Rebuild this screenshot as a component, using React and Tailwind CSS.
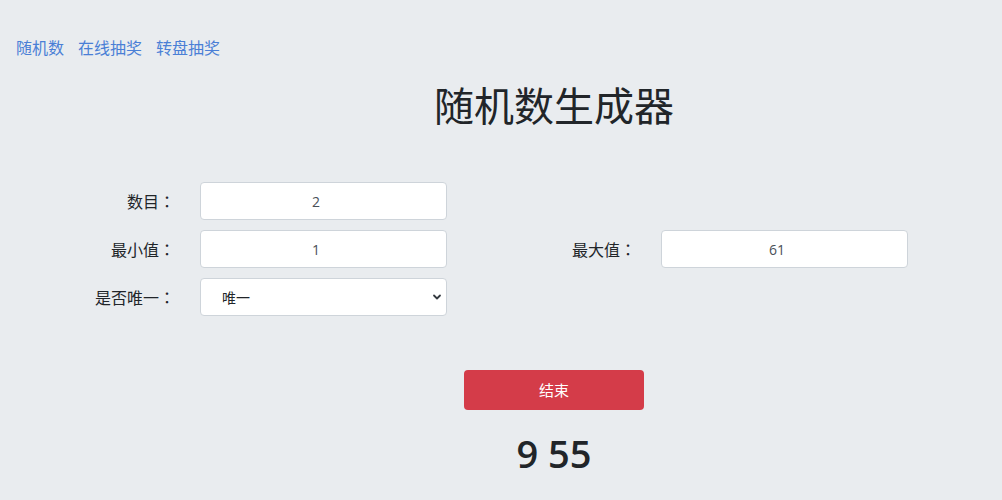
import React from "react";

const font = { fontFamily: '"Open Sans", "Noto Sans CJK SC", sans-serif' };

function Colon() {
  return <span className="font-['Noto_Sans_CJK_JP',sans-serif]">：</span>;
}

function Label({ children }) {
  return (
    <div className="w-[175px] text-right text-[16px] text-[#212529]">
      {children}
      <Colon />
    </div>
  );
}

function Field({ label, value }) {
  return (
    <div className="flex items-center w-[461px]">
      <Label>{label}</Label>
      <input
        readOnly
        value={value}
        className="ml-[25px] w-[247px] h-[38px] rounded-[4px] border border-[#ced4da] bg-white text-center pr-[15px] text-[14px] text-[#495057] outline-none"
      />
    </div>
  );
}

export default function App() {
  return (
    <div className="min-h-[500px] w-full bg-[#e9ecef]" style={font}>
      <nav className="flex gap-[14px] pl-[16px] pt-[36px] text-[16px] leading-[24px] text-[#4a7fd6]">
        <a href="#">随机数</a>
        <a href="#">在线抽奖</a>
        <a href="#">转盘抽奖</a>
      </nav>
      <div className="pl-[106px] flex justify-center mt-[22px]">
        <h1 className="text-[40px] leading-[48px] text-[#212529]">随机数生成器</h1>
      </div>
      <div className="mt-[52px] flex flex-col gap-[10px]">
        <div className="flex">
          <Field label="数目" value="2" />
        </div>
        <div className="flex">
          <Field label="最小值" value="1" />
          <Field label="最大值" value="61" />
        </div>
        <div className="flex items-center w-[461px]">
          <Label>是否唯一</Label>
          <div className="ml-[25px] relative w-[247px] h-[38px] rounded-[4px] border border-[#ced4da] bg-white flex items-center pl-[21px] text-[14px] text-[#212529]">
            <span>唯一</span>
            <svg className="absolute right-[4px] top-[14px]" width="10" height="8" viewBox="0 0 10 8" fill="none" stroke="#343a40" strokeWidth="1.8" strokeLinecap="round" strokeLinejoin="round">
              <path d="M2 2.5 L5 5.5 L8 2.5" />
            </svg>
          </div>
        </div>
      </div>
      <div className="pl-[106px] flex flex-col items-center">
        <button className="mt-[54px] w-[180px] h-[40px] rounded-[4px] bg-[#d43c49] text-white text-[15px]">结束</button>
        <div className="mt-[20px] text-[38px] leading-[46px] font-semibold text-[#212529]">9 55</div>
      </div>
    </div>
  );
}
